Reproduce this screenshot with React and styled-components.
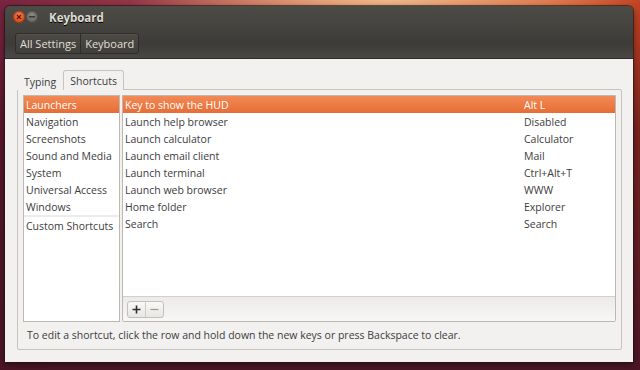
import React from "react";
import styled, { createGlobalStyle } from "styled-components";

const GlobalStyle = createGlobalStyle`
  html, body {
    margin: 0;
    padding: 0;
    width: 640px;
    height: 370px;
    overflow: hidden;
  }
  body {
    font-family: "Open Sans", "DejaVu Sans", sans-serif;
    background:
      radial-gradient(ellipse 260px 60px at 390px 0px, #f0b888 0%, rgba(232, 140, 90, 0) 100%),
      linear-gradient(90deg, #7a2540 0%, #9a3a48 25%, #d06a50 55%, #d8582c 85%, #c04020 100%);
  }
`;

const Desktop = styled.div`
  width: 640px;
  height: 370px;
  padding: 6px 7px 0 5px;
  box-sizing: border-box;
  background: linear-gradient(180deg, rgba(0, 0, 0, 0) 0%, rgba(60, 10, 30, 0.55) 35%, #4a1626 100%);
`;

const Window = styled.div`
  width: 628px;
  height: 356px;
  display: flex;
  flex-direction: column;
  border-radius: 5px 5px 0 0;
  overflow: hidden;
  box-shadow: 0 0 0 1px rgba(30, 20, 20, 0.6), 0 2px 6px rgba(0, 0, 0, 0.5);
`;

const TitleBar = styled.div`
  height: 22px;
  display: flex;
  align-items: center;
  padding-left: 8px;
  background: linear-gradient(180deg, #4d4b46 0%, #45433f 100%);
`;

const WinButton = styled.span`
  width: 12px;
  height: 12px;
  border-radius: 50%;
  margin-right: 1px;
  display: flex;
  align-items: center;
  justify-content: center;
  background: ${({ $close }) =>
    $close
      ? "radial-gradient(circle at 50% 35%, #f47a4e 0%, #df4b1c 70%)"
      : "radial-gradient(circle at 50% 35%, #8a8882 0%, #67655f 70%)"};
  box-shadow: inset 0 0 0 1px rgba(0, 0, 0, 0.25);
`;

const Title = styled.span`
  margin-left: 10px;
  font-weight: bold;
  font-size: 11.5px;
  color: #dfdbd2;
  text-shadow: 0 1px 0 #000;
`;

const ToolBar = styled.div`
  height: 30px;
  display: flex;
  align-items: center;
  padding-left: 10px;
  background: linear-gradient(180deg, #45433f 0%, #3c3b37 50%, #4a4844 100%);
  border-bottom: 1px solid #2c2b28;
`;

const Crumbs = styled.div`
  display: flex;
  height: 19px;
  border: 1px solid #2e2d2a;
  border-radius: 3px;
  background: linear-gradient(180deg, #4b4a45 0%, #403f3b 100%);
  box-shadow: inset 0 1px 0 rgba(255, 255, 255, 0.06);
`;

const Crumb = styled.span`
  display: flex;
  align-items: center;
  padding: 0 4px;
  font-size: 11px;
  color: #e2ded6;
  & + & {
    border-left: 1px solid #2e2d2a;
  }
`;

const Content = styled.div`
  flex: 1;
  display: flex;
  flex-direction: column;
  padding: 11px 11px 12px 12px;
  background: #f2f1f0;
`;

const Tabs = styled.div`
  display: flex;
  align-items: flex-end;
  height: 19px;
`;

const Tab = styled.div`
  height: ${({ $active }) => ($active ? "19px" : "17px")};
  display: flex;
  align-items: center;
  padding: 0 6px;
  font-size: 10.5px;
  color: #3c3c3c;
  border: 1px solid ${({ $active }) => ($active ? "#c7c4bf" : "transparent")};
  border-bottom: none;
  border-radius: 3px 3px 0 0;
  background: #f2f1f0;
  margin-bottom: -1px;
  position: relative;
  z-index: 1;
`;

const Frame = styled.div`
  flex: 1;
  display: flex;
  flex-direction: column;
  border: 1px solid #c7c4bf;
  border-radius: 0 2px 2px 2px;
  padding: 5px 5px 0 5px;
  background: #f2f1f0;
`;

const Panes = styled.div`
  display: flex;
  gap: 2px;
  height: 227px;
`;

const List = styled.div`
  width: ${({ $width }) => $width || "auto"};
  background: #fff;
  border: 1px solid #bcb9b3;
  box-sizing: border-box;
`;

const RightPane = styled.div`
  flex: 1;
  display: flex;
  flex-direction: column;
  border: 1px solid #bcb9b3;
  border-radius: 0 0 2px 2px;
`;

const RightList = styled.div`
  height: 200px;
  background: #fff;
  border-bottom: 1px solid #d3d0cb;
`;

const Row = styled.div`
  height: 17px;
  display: flex;
  align-items: center;
  padding-left: 2px;
  font-size: 10.5px;
  color: ${({ $selected }) => ($selected ? "#ffffff" : "#3c3c3c")};
  background: ${({ $selected }) =>
    $selected ? "linear-gradient(180deg, #f28a55 0%, #e76d36 100%)" : "transparent"};
  white-space: nowrap;
`;

const Separator = styled.div`
  height: 2px;
  background: #ececea;
`;

const Name = styled.span`
  width: 399px;
`;

const Value = styled.span``;

const ListToolbar = styled.div`
  flex: 1;
  display: flex;
  align-items: center;
  padding-left: 4px;
  background: linear-gradient(180deg, #ecebe9 0%, #f7f7f6 100%);
`;

const ButtonGroup = styled.div`
  display: flex;
  height: 15px;
  border: 1px solid #c3c0bb;
  border-radius: 3px;
  background: linear-gradient(180deg, #f8f8f7 0%, #e8e7e5 100%);
`;

const SmallButton = styled.span`
  width: 17px;
  display: flex;
  align-items: center;
  justify-content: center;
  & + & {
    border-left: 1px solid #cfccc7;
  }
`;

const Hint = styled.div`
  padding: 6px 0 0 4px;
  font-size: 10.5px;
  color: #3c3c3c;
`;

const sections = [
  "Launchers",
  "Navigation",
  "Screenshots",
  "Sound and Media",
  "System",
  "Universal Access",
  "Windows",
];

const shortcuts = [
  ["Key to show the HUD", "Alt L"],
  ["Launch help browser", "Disabled"],
  ["Launch calculator", "Calculator"],
  ["Launch email client", "Mail"],
  ["Launch terminal", "Ctrl+Alt+T"],
  ["Launch web browser", "WWW"],
  ["Home folder", "Explorer"],
  ["Search", "Search"],
];

export default function App() {
  return (
    <>
      <GlobalStyle />
      <Desktop>
        <Window>
          <TitleBar>
            <WinButton $close>
              <svg width="6" height="6" viewBox="0 0 6 6">
                <path d="M1 1L5 5M5 1L1 5" stroke="#5a1a08" strokeWidth="1.2" />
              </svg>
            </WinButton>
            <WinButton>
              <svg width="6" height="2" viewBox="0 0 6 2">
                <rect width="6" height="1.5" fill="#3a3935" />
              </svg>
            </WinButton>
            <Title>Keyboard</Title>
          </TitleBar>
          <ToolBar>
            <Crumbs>
              <Crumb>All Settings</Crumb>
              <Crumb>Keyboard</Crumb>
            </Crumbs>
          </ToolBar>
          <Content>
            <Tabs>
              <Tab>Typing</Tab>
              <Tab $active>Shortcuts</Tab>
            </Tabs>
            <Frame>
              <Panes>
                <List $width="97px">
                  {sections.map((s, i) => (
                    <Row key={s} $selected={i === 0}>
                      {s}
                    </Row>
                  ))}
                  <Separator />
                  <Row>Custom Shortcuts</Row>
                </List>
                <RightPane>
                  <RightList>
                    {shortcuts.map(([name, value], i) => (
                      <Row key={name} $selected={i === 0}>
                        <Name>{name}</Name>
                        <Value>{value}</Value>
                      </Row>
                    ))}
                  </RightList>
                  <ListToolbar>
                    <ButtonGroup>
                      <SmallButton>
                        <svg width="9" height="9" viewBox="0 0 9 9">
                          <path d="M4.5 0.5V8.5M0.5 4.5H8.5" stroke="#2e2e2e" strokeWidth="1.6" />
                        </svg>
                      </SmallButton>
                      <SmallButton>
                        <svg width="9" height="9" viewBox="0 0 9 9">
                          <path d="M0.5 4.5H8.5" stroke="#9a9893" strokeWidth="1.2" />
                        </svg>
                      </SmallButton>
                    </ButtonGroup>
                  </ListToolbar>
                </RightPane>
              </Panes>
              <Hint>
                To edit a shortcut, click the row and hold down the new keys or press Backspace to
                clear.
              </Hint>
            </Frame>
          </Content>
        </Window>
      </Desktop>
    </>
  );
}
